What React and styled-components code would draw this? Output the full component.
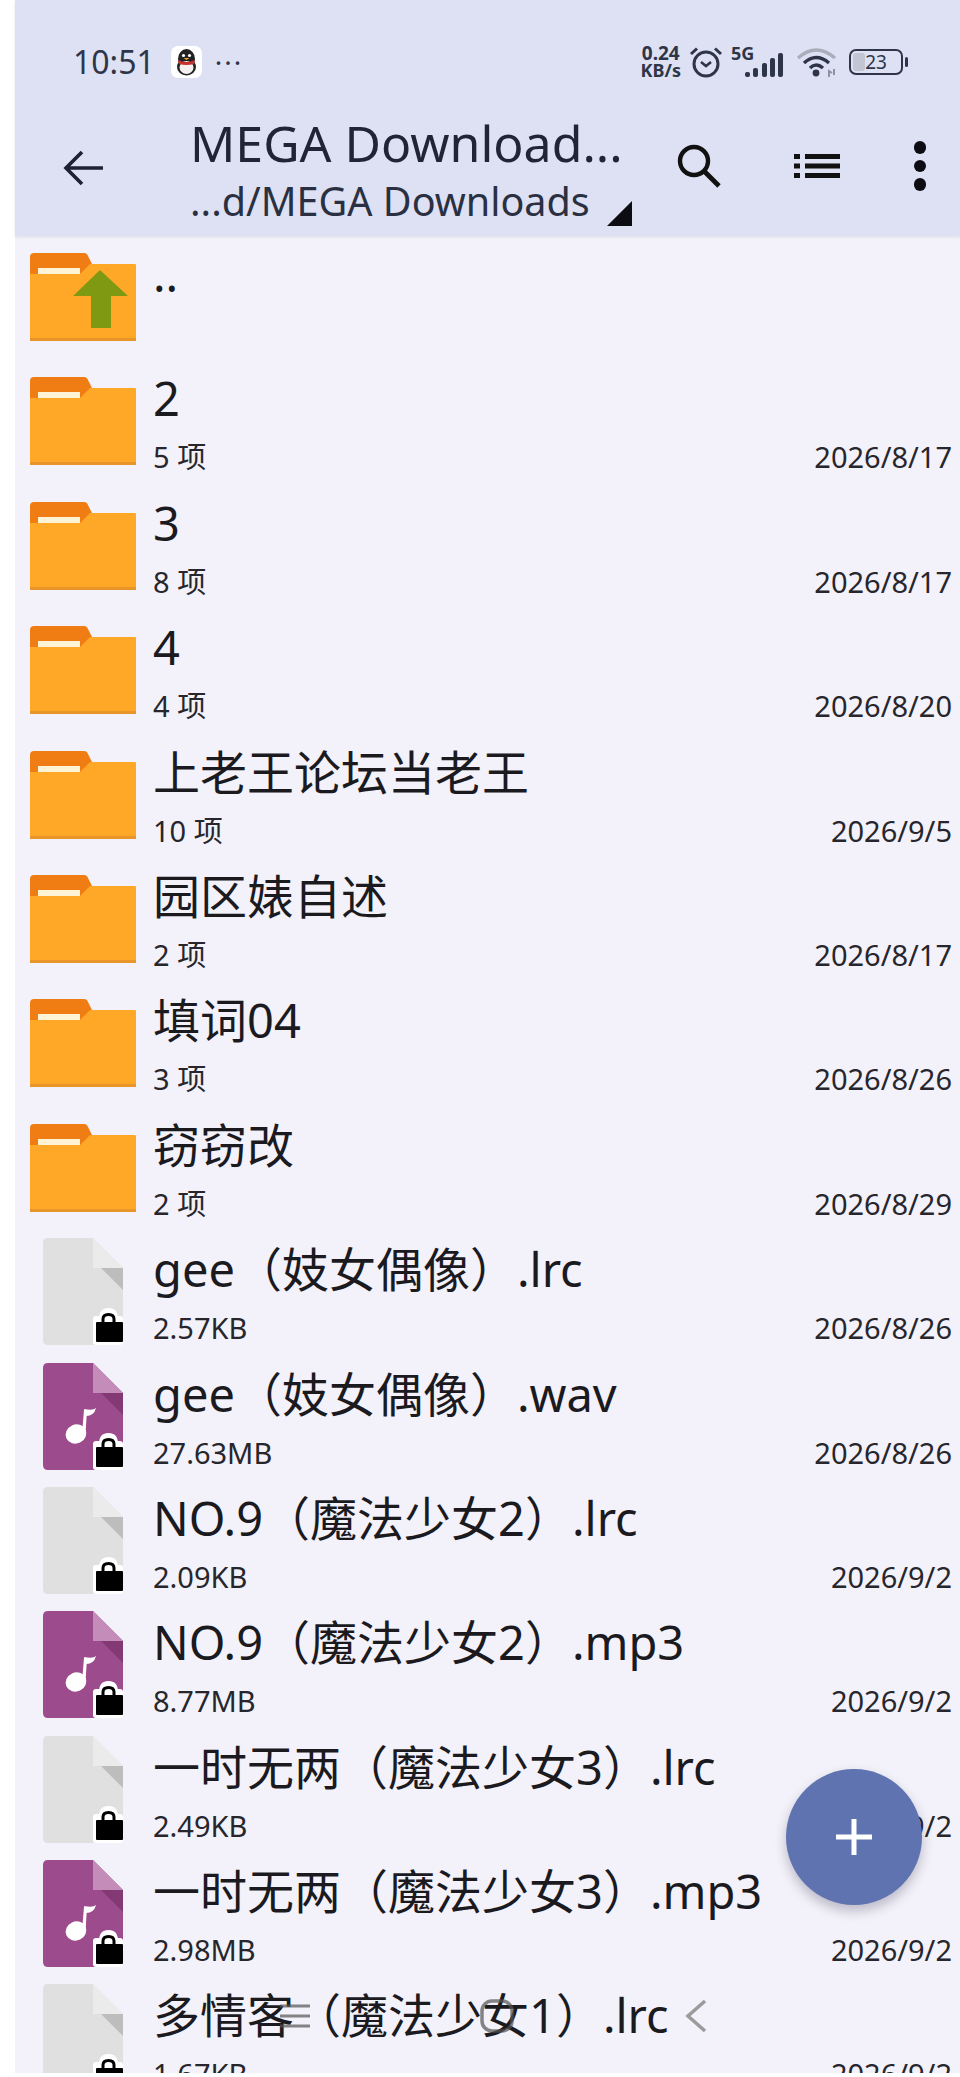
import styled, { createGlobalStyle } from 'styled-components';

const GlobalStyle = createGlobalStyle`
  html, body {
    margin: 0;
    padding: 0;
    background: #fff;
  }
`;

const fontStack = `'Noto Sans', 'Noto Sans CJK SC', sans-serif`;

const rows = [
  { type: 'up', title: '..' },
  { type: 'folder', title: '2', info: '5 项', date: '2026/8/17' },
  { type: 'folder', title: '3', info: '8 项', date: '2026/8/17' },
  { type: 'folder', title: '4', info: '4 项', date: '2026/8/20' },
  { type: 'folder', title: '上老王论坛当老王', info: '10 项', date: '2026/9/5' },
  { type: 'folder', title: '园区婊自述', info: '2 项', date: '2026/8/17' },
  { type: 'folder', title: '填词04', info: '3 项', date: '2026/8/26' },
  { type: 'folder', title: '窃窃改', info: '2 项', date: '2026/8/29' },
  { type: 'text', title: 'gee（妓女偶像）.lrc', info: '2.57KB', date: '2026/8/26' },
  { type: 'audio', title: 'gee（妓女偶像）.wav', info: '27.63MB', date: '2026/8/26' },
  { type: 'text', title: 'NO.9（魔法少女2）.lrc', info: '2.09KB', date: '2026/9/2' },
  { type: 'audio', title: 'NO.9（魔法少女2）.mp3', info: '8.77MB', date: '2026/9/2' },
  { type: 'text', title: '一时无两（魔法少女3）.lrc', info: '2.49KB', date: '2026/9/2' },
  { type: 'audio', title: '一时无两（魔法少女3）.mp3', info: '2.98MB', date: '2026/9/2' },
  { type: 'text', title: '多情客（魔法少女1）.lrc', info: '1.67KB', date: '2026/9/2' },
];

const FolderIcon = ({ up }) => (
  <svg width="106" height="88" viewBox="0 0 106 88">
    <path d="M0 4 Q0 0 4 0 H54 Q57 0 58 3 L62 11 H104 Q106 11 106 13 V87 H0 Z" fill="#F07D14" />
    <path d="M0 21 H50 L60 11 H104 Q106 11 106 13 V87 H0 Z" fill="#FFA726" />
    <rect x="8" y="15" width="42" height="6" fill="#FFF3D6" />
    <rect x="0" y="85" width="106" height="3" fill="#E8962A" />
    {up && (
      <path d="M70 17 L98 43 H81 V75 H61 V43 H43 Z" fill="#7F9A12" />
    )}
  </svg>
);

const FileIcon = ({ audio }) => (
  <svg width="80" height="107" viewBox="0 0 80 107">
    <path
      d="M5 0 H50 L80 30 V102 Q80 107 75 107 H5 Q0 107 0 102 V5 Q0 0 5 0 Z"
      fill={audio ? '#9C4C8C' : '#E0E0E0'}
    />
    <path d="M50 0 L80 30 H50 Z" fill={audio ? '#C48DB9' : '#EBEBEB'} />
    <path d="M58 30 H80 V52 Z" fill={audio ? '#833A74' : '#BDBDBD'} />
    {audio && (
      <g fill="#fff">
        <ellipse cx="33" cy="71" rx="10.5" ry="9.5" transform="rotate(-25 33 71)" />
        <path d="M39 71 L41 47 H44 L42.5 71 Z" />
        <path d="M41 46 Q50 48 53 45 Q51 53 43 53 Z" />
      </g>
    )}
    <rect x="50" y="78" width="30" height="29" rx="3" fill="#fff" />
    <path
      d="M60 84 V81 Q60 74 65.5 74 Q71 74 71 81 V84"
      fill="none"
      stroke="#fff"
      strokeWidth="8"
    />
    <path
      d="M60 84 V81 Q60 76.5 65.5 76.5 Q71 76.5 71 81 V84"
      fill="none"
      stroke="#000"
      strokeWidth="3"
    />
    <rect x="53" y="84" width="27" height="20" rx="1" fill="#000" />
  </svg>
);

const QQIcon = () => (
  <svg width="31" height="32" viewBox="0 0 31 32">
    <rect width="31" height="32" rx="7" fill="#fff" />
    <ellipse cx="15.5" cy="13" rx="8.5" ry="10" fill="#222" />
    <ellipse cx="15.5" cy="21" rx="9.5" ry="8.5" fill="#222" />
    <ellipse cx="15.5" cy="21.5" rx="7" ry="6.5" fill="#F5EFEF" />
    <path d="M7 14 Q15.5 18 24 14 L23 18 Q15.5 20 8 18 Z" fill="#C8312E" />
    <circle cx="12.5" cy="9.5" r="1.6" fill="#fff" />
    <circle cx="18.5" cy="9.5" r="1.6" fill="#fff" />
    <path d="M12.5 12 H18.5 L15.5 14 Z" fill="#E9A82C" />
  </svg>
);

const AlarmIcon = () => (
  <svg width="34" height="32" viewBox="0 0 34 32" fill="none" stroke="#2E3548">
    <circle cx="17" cy="18" r="12" strokeWidth="3" />
    <path d="M12 16 L17 20 L22 16" strokeWidth="2.6" />
    <path d="M2 8 L8 2.5 M32 8 L26 2.5" strokeWidth="3" />
  </svg>
);

const SignalIcon = () => (
  <svg width="40" height="26" viewBox="0 0 40 26" fill="#2E3548">
    <rect x="1" y="20" width="5" height="5" rx="2" />
    <rect x="9" y="16" width="5" height="9" rx="2" />
    <rect x="18" y="11" width="5" height="14" rx="2" />
    <rect x="26" y="6" width="5" height="19" rx="2" />
    <rect x="34" y="1" width="5" height="24" rx="2" />
  </svg>
);

const WifiIcon = () => (
  <svg width="42" height="32" viewBox="0 0 42 32" fill="none">
    <path d="M2 12 Q20 -4 39 12" stroke="#A9AEBB" strokeWidth="3.4" />
    <path d="M8 17 Q20 6 33 17" stroke="#2E3548" strokeWidth="3.4" />
    <path d="M14 22 Q20 16 27 22" stroke="#2E3548" strokeWidth="3.4" />
    <circle cx="20" cy="27" r="3.4" fill="#2E3548" />
    <path d="M33 31 V25 L36 27 M38 23 V29" stroke="#8C92A2" strokeWidth="2" />
  </svg>
);

const SearchIcon = () => (
  <svg width="44" height="44" viewBox="0 0 44 44" fill="none" stroke="#111">
    <circle cx="17" cy="17" r="14" strokeWidth="4.4" />
    <path d="M27 27 L42 42" strokeWidth="4.8" />
  </svg>
);

const ListIcon = () => (
  <svg width="46" height="26" viewBox="0 0 46 26" fill="#111">
    <rect x="0" y="1" width="6" height="5" />
    <rect x="0" y="10.5" width="6" height="5" />
    <rect x="0" y="20" width="6" height="5" />
    <rect x="11" y="1" width="35" height="5" />
    <rect x="11" y="10.5" width="35" height="5" />
    <rect x="11" y="20" width="35" height="5" />
  </svg>
);

const App = () => (
  <>
    <GlobalStyle />
    <Page>
      <Header>
        <StatusBar>
          <StatusLeft>
            <Clock>10:51</Clock>
            <QQIcon />
            <MoreDots>···</MoreDots>
          </StatusLeft>
          <StatusRight>
            <Speed>
              <SpeedValue>0.24</SpeedValue>
              <SpeedUnit>KB/s</SpeedUnit>
            </Speed>
            <AlarmIcon />
            <Network>
              <NetworkLabel>5G</NetworkLabel>
              <SignalIcon />
            </Network>
            <WifiIcon />
            <Battery>
              <BatteryBody>
                <BatteryFill />
                <BatteryLevel>23</BatteryLevel>
              </BatteryBody>
              <BatteryTip />
            </Battery>
          </StatusRight>
        </StatusBar>
        <Toolbar>
          <BackButton viewBox="0 0 40 36" fill="none" stroke="#1C2233">
            <path d="M19 2 L3 18 L19 34 M3 18 H40" strokeWidth="3.6" />
          </BackButton>
          <Titles>
            <Title>MEGA Download...</Title>
            <PathRow>
              <PathText>...d/MEGA Downloads</PathText>
              <PathCorner />
            </PathRow>
          </Titles>
          <Actions>
            <SearchIcon />
            <ListIcon />
            <Kebab>
              <KebabDot />
              <KebabDot />
              <KebabDot />
            </Kebab>
          </Actions>
        </Toolbar>
      </Header>
      <List>
        {rows.map((row, index) => (
          <Row key={index}>
            <IconSlot $file={row.type === 'text' || row.type === 'audio'}>
              {row.type === 'up' && <FolderIcon up />}
              {row.type === 'folder' && <FolderIcon />}
              {row.type === 'text' && <FileIcon />}
              {row.type === 'audio' && <FileIcon audio />}
            </IconSlot>
            <RowText>
              <RowTitle>{row.title}</RowTitle>
              {row.info && (
                <RowMeta>
                  <span>{row.info}</span>
                  <span>{row.date}</span>
                </RowMeta>
              )}
            </RowText>
          </Row>
        ))}
      </List>
      <Fab>
        <svg width="36" height="36" viewBox="0 0 36 36" stroke="#fff" strokeWidth="5">
          <path d="M18 0 V36 M0 18 H36" />
        </svg>
      </Fab>
      <GhostNav>
        <svg width="30" height="28" viewBox="0 0 30 28" stroke="#555" strokeWidth="3">
          <path d="M0 4 H30 M0 14 H30 M0 24 H30" />
        </svg>
        <svg width="36" height="36" viewBox="0 0 36 36" fill="none" stroke="#555" strokeWidth="3.5">
          <rect x="3" y="3" width="30" height="30" rx="10" />
        </svg>
        <svg width="24" height="36" viewBox="0 0 24 36" fill="none" stroke="#777" strokeWidth="3.5">
          <path d="M21 3 L4 18 L21 33" />
        </svg>
      </GhostNav>
    </Page>
  </>
);

const Page = styled.div`
  position: relative;
  width: 960px;
  height: 2073px;
  padding-left: 15px;
  box-sizing: border-box;
  overflow: hidden;
  background: #f3f1f9 content-box;
  font-family: ${fontStack};
  color: #1a1a1f;
`;

const Header = styled.header`
  height: 236px;
  background: #dde1f3;
  box-shadow: 0 1px 3px rgba(60, 60, 90, 0.12);
  display: flex;
  flex-direction: column;
  color: #1f2536;
`;

const StatusBar = styled.div`
  height: 88px;
  padding: 42px 52px 0 58px;
  box-sizing: border-box;
  display: flex;
  justify-content: space-between;
  align-items: flex-start;
`;

const StatusLeft = styled.div`
  display: flex;
  align-items: center;
  gap: 16px;
  height: 40px;
`;

const Clock = styled.span`
  font-size: 32px;
  line-height: 40px;
  color: #2e3548;
`;

const MoreDots = styled.span`
  font-size: 28px;
  line-height: 40px;
  letter-spacing: 2px;
  color: #2e3548;
  margin-left: -3px;
`;

const StatusRight = styled.div`
  display: flex;
  align-items: center;
  gap: 8px;
  height: 40px;
  color: #2e3548;
`;

const Speed = styled.div`
  display: flex;
  flex-direction: column;
  align-items: center;
  font-weight: 700;
`;

const SpeedValue = styled.span`
  font-size: 19px;
  line-height: 17px;
`;

const SpeedUnit = styled.span`
  font-size: 18px;
  line-height: 17px;
`;

const Network = styled.div`
  position: relative;
  width: 53px;
  height: 32px;
  margin-right: 4px;
  display: flex;
  align-items: flex-end;
  justify-content: flex-end;
`;

const NetworkLabel = styled.span`
  position: absolute;
  left: 0;
  top: -2px;
  font-size: 18px;
  line-height: 18px;
  font-weight: 700;
`;

const Battery = styled.div`
  display: flex;
  align-items: center;
  gap: 2px;
  margin-left: 3px;
`;

const BatteryBody = styled.div`
  position: relative;
  width: 54px;
  height: 26px;
  box-sizing: border-box;
  border: 2.5px solid #2e3548;
  border-radius: 7px;
  display: flex;
  align-items: center;
  justify-content: center;
  overflow: hidden;
`;

const BatteryFill = styled.div`
  position: absolute;
  left: 2px;
  top: 2px;
  bottom: 2px;
  width: 12px;
  border-radius: 3px;
  background: #c2c6d4;
`;

const BatteryLevel = styled.span`
  position: relative;
  font-size: 19px;
  line-height: 20px;
`;

const BatteryTip = styled.div`
  width: 3px;
  height: 10px;
  border-radius: 2px;
  background: #2e3548;
`;

const Toolbar = styled.div`
  flex: 1;
  padding: 0 34px 0 48px;
  display: flex;
  align-items: center;
`;

const BackButton = styled.svg`
  width: 40px;
  height: 36px;
  flex: none;
  margin-top: 11px;
`;

const Titles = styled.div`
  margin-left: 87px;
  width: 440px;
  align-self: flex-start;
  padding-top: 24px;
  display: flex;
  flex-direction: column;
`;

const Title = styled.div`
  font-size: 50px;
  line-height: 62px;
  white-space: nowrap;
`;

const PathRow = styled.div`
  position: relative;
  height: 44px;
  margin-top: 5px;
`;

const PathText = styled.div`
  font-size: 39.5px;
  line-height: 44px;
  white-space: nowrap;
  color: #2a3042;
`;

const PathCorner = styled.div`
  position: absolute;
  left: 417px;
  top: 22px;
  width: 0;
  height: 0;
  border-style: solid;
  border-width: 0 0 25px 25px;
  border-color: transparent transparent #0c0c12 transparent;
`;

const Actions = styled.div`
  margin-left: 47px;
  flex: 1;
  display: flex;
  align-items: center;
  justify-content: space-between;
  margin-top: 8px;
`;

const Kebab = styled.div`
  display: flex;
  flex-direction: column;
  gap: 6px;
`;

const KebabDot = styled.div`
  width: 12.5px;
  height: 12.5px;
  border-radius: 50%;
  background: #0c0c12;
`;

const List = styled.div`
  display: flex;
  flex-direction: column;
`;

const Row = styled.div`
  height: 124.4px;
  flex: none;
  display: flex;
  padding-right: 8px;
`;

const IconSlot = styled.div`
  width: 138px;
  flex: none;
  box-sizing: border-box;
  padding-top: ${(p) => (p.$file ? '7px' : '17px')};
  padding-left: ${(p) => (p.$file ? '28px' : '15px')};
`;

const RowText = styled.div`
  flex: 1;
  min-width: 0;
  padding-top: 8px;
  display: flex;
  flex-direction: column;
`;

const RowTitle = styled.div`
  font-size: 47px;
  line-height: 60px;
  white-space: nowrap;
`;

const RowMeta = styled.div`
  display: flex;
  justify-content: space-between;
  font-size: 29px;
  line-height: 36px;
  margin-top: 11px;
  color: #26262c;
`;

const Fab = styled.div`
  position: absolute;
  left: 786px;
  top: 1769px;
  width: 136px;
  height: 136px;
  border-radius: 50%;
  background: #5f73b0;
  box-shadow: 0 6px 12px rgba(40, 40, 70, 0.28);
  display: flex;
  align-items: center;
  justify-content: center;
`;

const GhostNav = styled.div`
  position: absolute;
  left: 280px;
  top: 1998px;
  width: 428px;
  display: flex;
  align-items: center;
  justify-content: space-between;
  opacity: 0.7;
`;

export default App;
